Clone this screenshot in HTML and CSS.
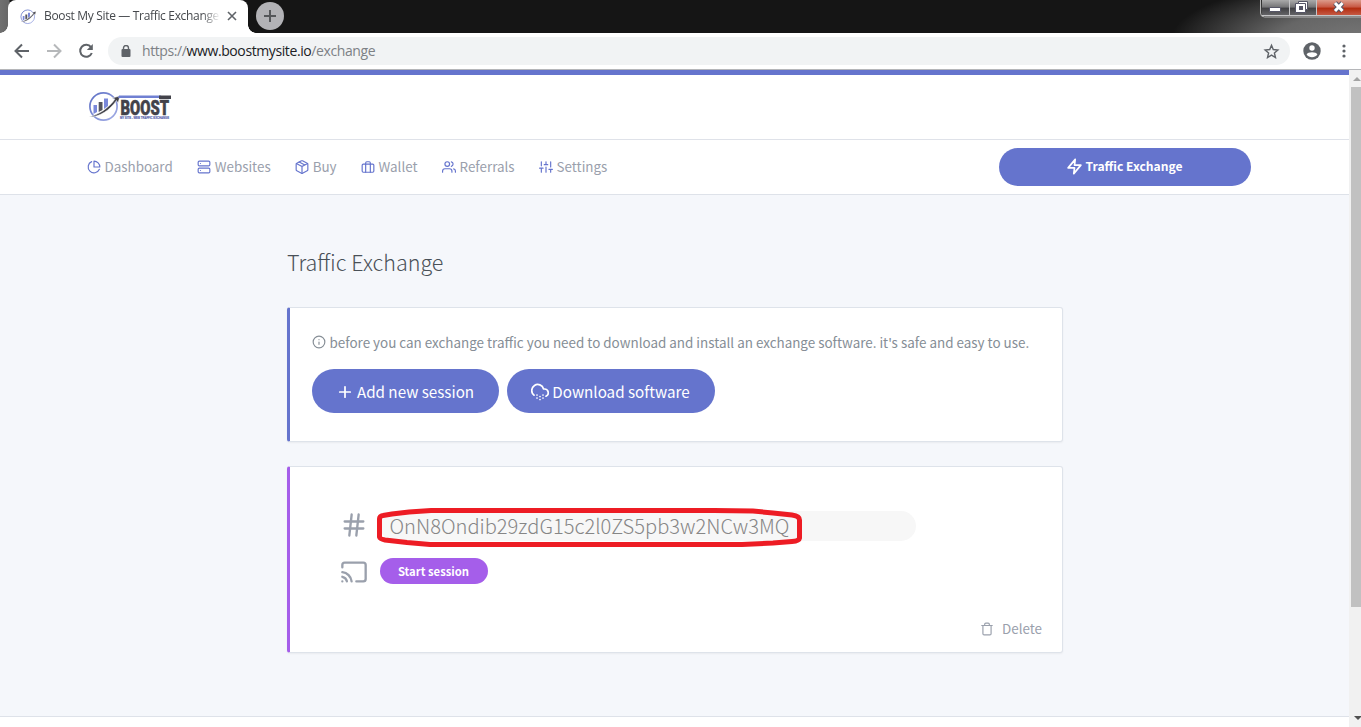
FILE: index.html
```html
<!DOCTYPE html>
<html lang="en">
<head>
<meta charset="utf-8">
<title>Boost My Site — Traffic Exchange</title>
<link rel="stylesheet" href="styles.css">
</head>
<body>
<svg class="defs" width="0" height="0">
  <defs>
    <linearGradient id="ring" x1="0" y1="0" x2="1" y2="1"><stop offset="0" stop-color="#5d6fc4"/><stop offset="1" stop-color="#a3aee6"/></linearGradient>
    <symbol id="mark" viewBox="0 0 32 32">
      <circle cx="15.500" cy="15.500" r="13.600" fill="none" stroke="url(#ring)" stroke-width="1.700"/>
      <path d="M5.500 14h3.500v7l-3.500 2zM16 7.500h4v7.500L16 18z" fill="#7a88da"/>
      <path d="M10.700 11h3.800v8l-3.800 2z" fill="#55555e"/>
      <path d="M1 26c9-2 20-9 26-18l-3-1 8-2-2 7-1.500-2.500C22 19 12 26 1 26z" fill="#42424a" stroke="#fff" stroke-width=".5"/>
    </symbol>
  </defs>
</svg>
<div class="browser">
  <div class="tabstrip">
    <div class="tab">
      <svg class="favicon"><use href="#mark"/></svg>
      <span class="tab-title">Boost My Site — Traffic Exchange</span>
      <svg class="tab-close" viewBox="0 0 10 10"><path d="M1 1l8 8M9 1l-8 8"/></svg>
    </div>
    <div class="new-tab"><svg viewBox="0 0 12 12"><path d="M6 0v12M0 6h12"/></svg></div>
    <svg class="window-buttons" width="103" height="19" viewBox="0 0 103 19">
      <defs>
        <linearGradient id="wb" x1="0" y1="0" x2="0" y2="1"><stop offset="0" stop-color="#aaa"/><stop offset=".45" stop-color="#747476"/><stop offset=".5" stop-color="#404043"/><stop offset="1" stop-color="#69696c"/></linearGradient>
        <linearGradient id="wc" x1="0" y1="0" x2="0" y2="1"><stop offset="0" stop-color="#dc9b8b"/><stop offset=".45" stop-color="#c75742"/><stop offset=".5" stop-color="#b22b0e"/><stop offset="1" stop-color="#c8604b"/></linearGradient>
      </defs>
      <path d="M1.500 0v13q0 4 4 4H103" fill="none" stroke="#b5b5b5"/>
      <path d="M3 0h98v13q0 3-3 3H6q-3 0-3-3z" fill="url(#wb)"/>
      <path d="M58 0h45v16H58z" fill="url(#wc)"/>
      <path d="M30.500 0v16M57.500 0v16M3 15.500h100" stroke="#c5c5c7" fill="none"/>
      <path d="M10.500 7.500h11v4h-11z" fill="#fff" stroke="#555566"/>
      <path d="M39.500 1.500h9v8h-2v3h-10v-9h3z" fill="#fff" stroke="#555566"/>
      <path d="M39.500 3.500h7v6" fill="none" stroke="#555566"/>
      <path d="M40 6h4v4h-4z" fill="#555566"/>
      <path d="M76 3l7.500 8M83.500 3L76 11" stroke="#555566" stroke-width="5"/>
      <path d="M76 3l7.500 8M83.500 3L76 11" stroke="#fff" stroke-width="3"/>
    </svg>
  </div>
  <div class="toolbar">
    <svg class="tb-icon" viewBox="0 0 16 16"><path d="M15 8H2M8 1.500L1.500 8 8 14.500"/></svg>
    <svg class="tb-icon faded" viewBox="0 0 16 16"><path d="M1 8h13M8 1.500L14.500 8 8 14.500"/></svg>
    <svg class="tb-icon" viewBox="0 0 16 16"><path d="M13 4.200A6 6 0 1 0 13.800 10"/><path d="M14.800 1v6h-6z" fill="#5f6368" stroke="none"/></svg>
    <div class="omnibox">
      <svg class="lock" viewBox="0 0 10 12"><path d="M2.500 5V3a2.500 2.500 0 0 1 5 0v2" fill="none" stroke="#5f6368" stroke-width="1.400"/><rect x=".5" y="4" width="9" height="8" rx="1" fill="#5f6368"/></svg>
      <span class="url">https://<b>www.boostmysite.io</b>/exchange</span>
      <svg class="star" viewBox="0 0 24 24"><path d="M12 3.200l2.500 6 6.500.600-4.900 4.300 1.500 6.400-5.600-3.400-5.600 3.400 1.500-6.400L3 9.800l6.500-.600z"/></svg>
    </div>
    <svg class="profile" viewBox="0 0 18 18"><circle cx="9" cy="9" r="8.700" fill="#5f6368"/><circle cx="9" cy="6" r="2.700" fill="#fff"/><path d="M3.600 12.500c1-3 9.800-3 10.800 0-2.500 3.700-8.300 3.700-10.800 0z" fill="#fff"/></svg>
    <svg class="menu" viewBox="0 0 4 14"><circle cx="2" cy="2" r="1.600"/><circle cx="2" cy="7" r="1.600"/><circle cx="2" cy="12" r="1.600"/></svg>
  </div>
</div>
<div class="viewport">
  <div class="page">
    <header class="header">
      <svg class="logo" width="88" height="34" viewBox="0 0 88 34">
        <use href="#mark" width="32" height="32"/>
        <path d="M31 4.500h42v2.500H30z" fill="#7080d2"/>
        <path d="M71 4.500h12v3.500H71z" fill="#42424a"/>
        <text x="32.500" y="23.500" class="logo-name" textLength="48.500" lengthAdjust="spacingAndGlyphs">BOOST</text>
        <text x="32" y="28" class="logo-sub" textLength="49" lengthAdjust="spacingAndGlyphs">MY SITE - WEB TRAFFIC EXCHANGE</text>
      </svg>
    </header>
    <nav class="nav">
      <div class="links">
        <a><svg class="ico" viewBox="0 0 24 24"><path d="M21.210 15.890A10 10 0 1 1 8 2.830"/><path d="M22 12A10 10 0 0 0 12 2v10z"/></svg><span>Dashboard</span></a>
        <a><svg class="ico" viewBox="0 0 24 24"><rect x="2" y="2" width="20" height="8" rx="2"/><rect x="2" y="14" width="20" height="8" rx="2"/><path d="M6 6h.010M6 18h.010"/></svg><span>Websites</span></a>
        <a><svg class="ico" viewBox="0 0 24 24"><path d="M12.890 1.450l8 4A2 2 0 0 1 22 7.240v9.530a2 2 0 0 1-1.110 1.790l-8 4a2 2 0 0 1-1.790 0l-8-4a2 2 0 0 1-1.100-1.800V7.240a2 2 0 0 1 1.110-1.790l8-4a2 2 0 0 1 1.780 0z"/><path d="M2.320 6.160L12 11l9.680-4.840M12 22.760V11M7 3.500l10 5"/></svg><span>Buy</span></a>
        <a><svg class="ico" viewBox="0 0 24 24"><rect x="2" y="7" width="20" height="14" rx="2"/><path d="M16 21V5a2 2 0 0 0-2-2h-4a2 2 0 0 0-2 2v16"/></svg><span>Wallet</span></a>
        <a><svg class="ico" viewBox="0 0 24 24"><path d="M17 21v-2a4 4 0 0 0-4-4H5a4 4 0 0 0-4 4v2"/><circle cx="9" cy="7" r="4"/><path d="M23 21v-2a4 4 0 0 0-3-3.870M16 3.130a4 4 0 0 1 0 7.750"/></svg><span>Referrals</span></a>
        <a><svg class="ico" viewBox="0 0 24 24"><path d="M4 21v-7M4 10V3M12 21v-9M12 8V3M20 21v-5M20 12V3M1 14h6M9 8h6M17 16h6"/></svg><span>Settings</span></a>
      </div>
      <a class="btn exchange"><svg class="ico" viewBox="0 0 24 24"><path d="M13 2L3 14h9l-1 8 10-12h-9l1-8z"/></svg><span>Traffic Exchange</span></a>
    </nav>
    <main class="main">
      <h1 class="title">Traffic Exchange</h1>
      <section class="card intro">
        <p class="note"><svg class="ico" viewBox="0 0 24 24"><circle cx="12" cy="12" r="10"/><path d="M12 16v-4M12 8h.010"/></svg><span>before you can exchange traffic you need to download and install an exchange software. it's safe and easy to use.</span></p>
        <div class="actions">
          <a class="btn add"><svg class="ico" viewBox="0 0 24 24"><path d="M12 5v14M5 12h14"/></svg><span>Add new session</span></a>
          <a class="btn download"><svg class="ico" viewBox="0 0 24 24"><path d="M20 17.580A5 5 0 0 0 18 8h-1.260A8 8 0 1 0 4 16.250M8 16h.010M8 20h.010M12 18h.010M12 22h.010M16 16h.010M16 20h.010"/></svg><span>Download software</span></a>
        </div>
      </section>
      <section class="card session">
        <div class="row code-row"><svg class="ico big" viewBox="0 0 24 24"><path d="M4 9h16M4 15h16M10 3L8 21M16 3l-2 18"/></svg><div class="code"><span>OnN8Ondib29zdG15c2l0ZS5pb3w2NCw3MQ</span>
          <svg class="marker" width="430" height="42" viewBox="0 0 430 42"><path d="M4.500 31V13Q4.500 10 8 9.500L17 8 34 6 56 4.500H339L378 5 398 7 417 9Q424.500 10 424.500 14V32Q424 35 417 35.500L398 37 367 38.500H55L32 36.500 10 34Q5 33 4.500 31z"/></svg></div></div>
        <div class="row start-row"><svg class="ico big" viewBox="0 0 24 24"><path d="M2 16.100A5 5 0 0 1 5.900 20M2 12.050A9 9 0 0 1 9.950 20M2 8V6a2 2 0 0 1 2-2h16a2 2 0 0 1 2 2v12a2 2 0 0 1-2 2h-6M2 20h.010"/></svg><a class="btn start"><span>Start session</span></a></div>
        <div class="delete"><svg class="ico" viewBox="0 0 24 24"><path d="M3 6h18M19 6v14a2 2 0 0 1-2 2H7a2 2 0 0 1-2-2V6m3 0V4a2 2 0 0 1 2-2h4a2 2 0 0 1 2 2v2"/></svg><span>Delete</span></div>
      </section>
    </main>
    <footer class="footer"></footer>
  </div>
  <div class="scrollbar">
    <svg class="arrow" width="10" height="17" viewBox="0 0 10 17"><path d="M2 11l4-4 4 4z" fill="#a3a3a3"/></svg>
    <div class="thumb"></div>
    <svg class="arrow" width="10" height="17" viewBox="0 0 10 17"><path d="M3 6h8l-4 4z" fill="#505050"/></svg>
  </div>
</div>
</body>
</html>
```
FILE: styles.css
```css
* { box-sizing: border-box; }
body { margin: 0; width: 1361px; height: 727px; overflow: hidden; font-family: "Noto Sans CJK SC", sans-serif; color: #9aa0ac; font-size: 13.4px; }
svg { display: block; flex: none; }
span { white-space: nowrap; }
.defs { position: absolute; }
.browser { height: 70px; font-family: "Open Sans", sans-serif; }
.tabstrip { height: 33px; display: flex; padding-left: 8px; background: radial-gradient(ellipse 190px 60px at 1361px 40px, #777 0, #666 45%, rgba(19,19,19,0) 100%), linear-gradient(90deg, #707070 0, #666 9px, #151515 10px, #151515 100%); }
.tab { position: relative; width: 240px; height: 33px; background: #fff; border-radius: 8px 8px 0 0; display: flex; align-items: center; padding-left: 12px; }
.tab::before, .tab::after { content: ""; position: absolute; bottom: 0; width: 8px; height: 8px; }
.tab::before { left: -8px; background: radial-gradient(circle at 0 0, transparent 7.5px, #fff 8px); }
.tab::after { right: -8px; background: radial-gradient(circle at 100% 0, transparent 7.5px, #fff 8px); }
.favicon { width: 16px; height: 16px; }
.tab-title { margin-left: 8px; margin-top: -1px; width: 176px; overflow: hidden; color: #45484c; font-size: 12px; letter-spacing: -0.33px; line-height: 18px; -webkit-mask-image: linear-gradient(90deg, #000 158px, transparent 176px); mask-image: linear-gradient(90deg, #000 158px, transparent 176px); }
.tab-close { width: 10px; height: 10px; margin-left: 7px; margin-top: -1px; fill: none; stroke: #5f6368; stroke-width: 1.6; }
.new-tab { width: 28px; height: 28px; border-radius: 14px; background: #b2b2b6; margin: 2px 0 0 8px; display: flex; align-items: center; justify-content: center; }
.new-tab svg { width: 12px; height: 12px; stroke: #55575a; stroke-width: 2; }
.window-buttons { margin-left: auto; margin-right: -1px; }
.toolbar { height: 37px; background: #fff; border-bottom: 1px solid #b5b6b9; display: flex; align-items: center; padding: 0 14px; }
.tb-icon { width: 16px; height: 16px; margin-right: 16px; fill: none; stroke: #5f6368; stroke-width: 2; }
.faded { opacity: .45; }
.omnibox { width: 1182px; height: 28px; margin-left: -2px; border-radius: 14px; background: #f1f3f4; display: flex; align-items: center; padding: 0 10px 0 13px; }
.lock { width: 10px; height: 12px; }
.url { margin-left: 11px; font-size: 14px; letter-spacing: -0.4px; color: #7d8185; line-height: 20px; }
.url b { color: #202124; font-weight: 400; }
.star { width: 17px; height: 17px; margin-left: auto; fill: none; stroke: #5f6368; stroke-width: 2; }
.profile { width: 18px; height: 18px; margin-left: 13px; }
.menu { width: 4px; height: 14px; margin-left: 21px; fill: #5f6368; }

.viewport { display: flex; height: 657px; }
.page { width: 1349px; background: #f5f7fb; border-top: 5px solid #6574cd; display: flex; flex-direction: column; }
.header { height: 65px; background: #fff; border-bottom: 1px solid #dfe2e9; padding: 16px 0 0 88px; }
.logo-name { font: 900 21px "Roboto", sans-serif; fill: #42424a; stroke: #42424a; stroke-width: .6; }
.logo-sub { font: 700 4px "Liberation Sans", sans-serif; fill: #5b68b0; stroke: #5b68b0; stroke-width: .2; }
.nav { height: 55px; background: #fff; border-bottom: 1px solid #dee2e9; display: flex; align-items: center; justify-content: space-between; padding: 0 98px 0 86.5px; }
.links { display: flex; gap: 24px; line-height: 20px; }
.links a { display: flex; align-items: center; gap: 4px; color: #9aa0ac; }
.links span, .btn span, .delete span { margin-top: -2px; }
.ico { width: 14px; height: 14px; fill: none; stroke: currentColor; stroke-width: 2; stroke-linecap: round; stroke-linejoin: round; }
.links .ico { stroke: #6574cd; }
.btn { display: flex; align-items: center; justify-content: center; background: #6574cd; color: #fff; border-radius: 22px; }
.exchange { width: 252px; height: 38px; padding-right: 2px; font-size: 12.1px; font-weight: 700; gap: 3px; }
.exchange .ico { width: 17px; height: 17px; stroke-width: 2.4; margin-top: -1px; }
.exchange span { margin-top: -3px; }
.main { width: 776px; margin-left: 287px; flex: 1; }
.title { margin: 52px 0 31px; height: 29px; font-size: 21.5px; font-weight: 300; line-height: 29px; color: #495057; }
.card { background: #fff; border: 1px solid #dee3ea; border-left: 3px solid #6574cd; border-radius: 3px; box-shadow: 0 1px 2px rgba(0,0,0,.05); }
.intro { height: 135px; padding: 23px 22px; }
.note { display: flex; align-items: center; gap: 3.5px; margin: 0; height: 23px; color: #868e96; font-size: 13.43px; }
.note .ico { margin-top: -1px; }
.note span { margin-top: -2px; }
.actions { display: flex; gap: 8px; margin-top: 15px; font-size: 15.2px; }
.actions .btn { height: 44px; gap: 3px; padding-right: 1px; }
.actions .ico { width: 18px; height: 18px; margin-top: 1px; stroke-width: 2.3; }
.actions span { margin-top: -1px; }
.add { width: 187px; }
.download { width: 208px; }
.session { margin-top: 24px; height: 187px; border-left-color: #a55eea; padding: 44px 20px 0 49.5px; }
.row { display: flex; align-items: center; }
.big { width: 28px; height: 28px; margin-top: -2px; }
.code { position: relative; width: 536px; height: 30px; margin-left: 12.5px; padding-left: 9.5px; background: #f7f7f7; border-radius: 15px; font-size: 20.1px; font-weight: 300; line-height: 30px; color: #868686; }
.marker { position: absolute; left: -5px; top: -5px; fill: none; stroke: #ed1c24; stroke-width: 5; }
.start-row { margin-top: 17px; }
.start-row .big { margin-top: 0; margin-bottom: -2px; }
.start { width: 108px; height: 26px; margin-left: 12.5px; padding-right: 1px; background: #a55eea; font-size: 11.3px; font-weight: 700; }
.start span { margin-top: -1px; }
.delete { display: flex; align-items: center; justify-content: flex-end; gap: 8px; height: 20px; margin-top: 35px; }
.footer { height: 11px; background: #fff; border-top: 1px solid #dee2e9; }
.scrollbar { width: 12px; background: #f1f1f1; padding-left: 2px; display: flex; flex-direction: column; }
.thumb { height: 520px; background: #c1c1c1; margin-bottom: auto; }
```
